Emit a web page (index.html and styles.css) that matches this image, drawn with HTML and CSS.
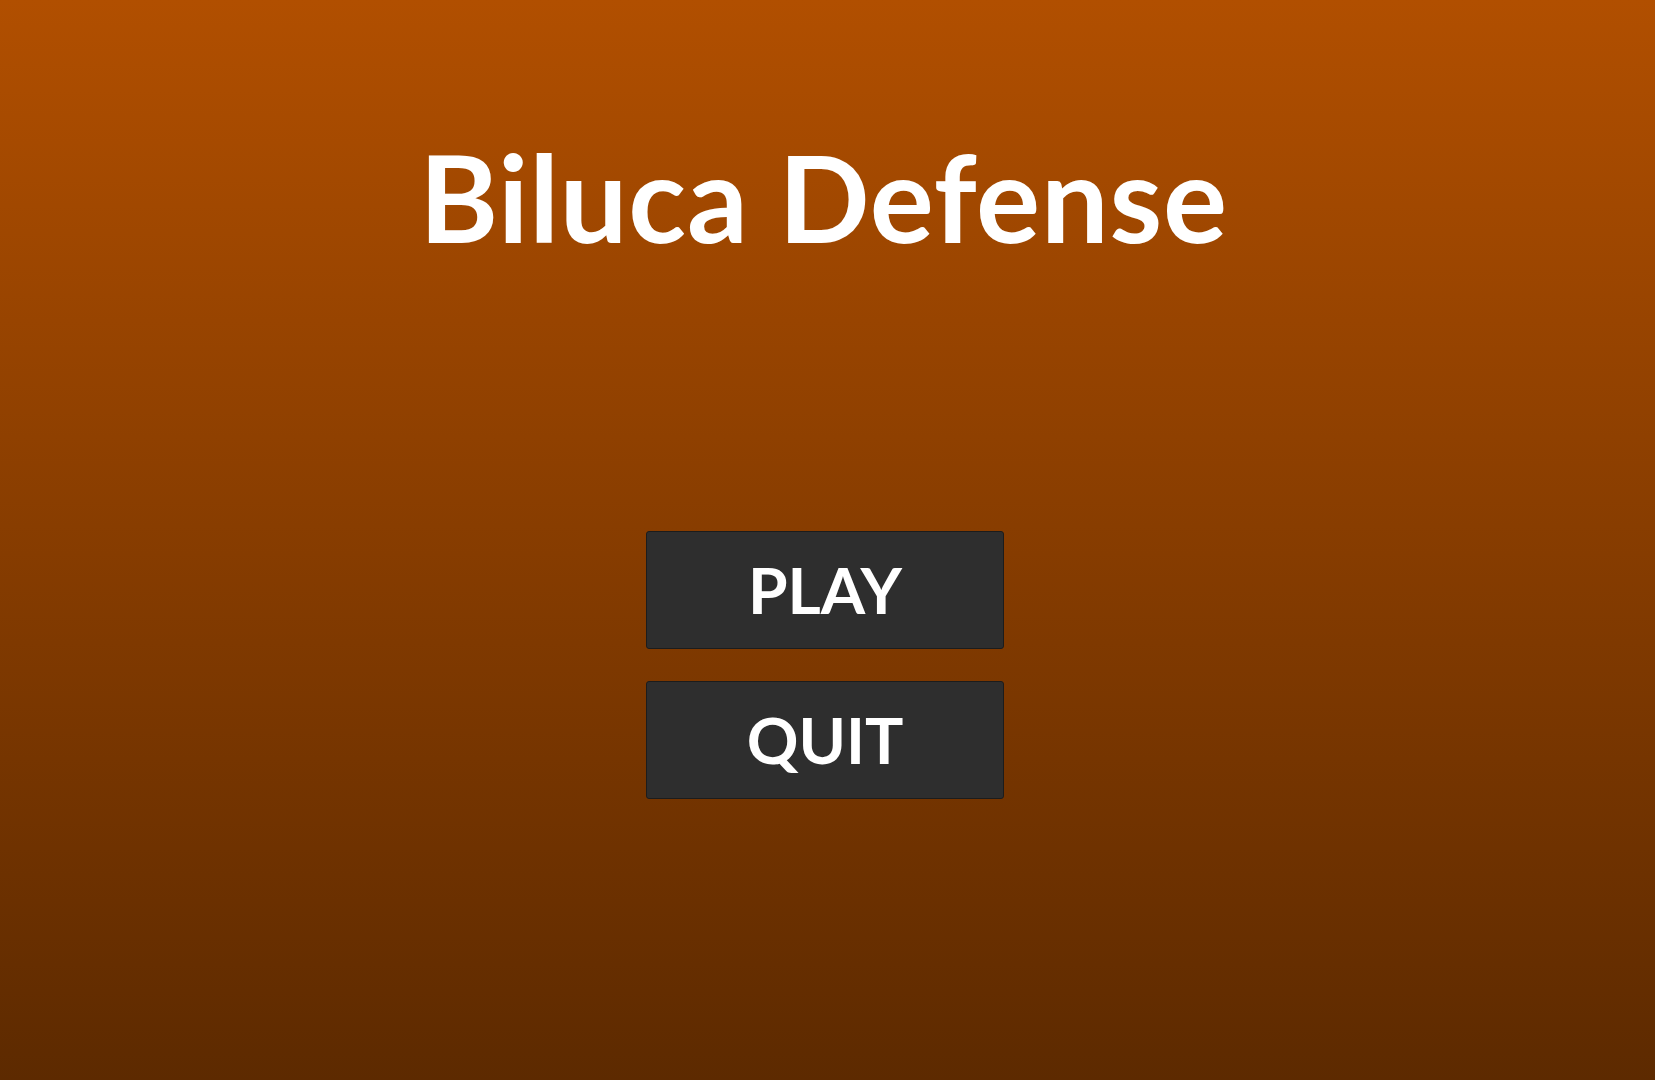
FILE: index.html
```html
<!DOCTYPE html>
<html lang="en">
<head>
<meta charset="utf-8">
<title>Biluca Defense</title>
<link rel="stylesheet" href="styles.css">
</head>
<body>
<main class="menu">
  <h1 class="title">Biluca Defense</h1>
  <div class="buttons">
    <button class="btn" type="button">PLAY</button>
    <button class="btn" type="button">QUIT</button>
  </div>
</main>
</body>
</html>
```
FILE: styles.css
```css
html, body {
  margin: 0;
  padding: 0;
  height: 100%;
}
body {
  background: linear-gradient(to bottom, #b14f00 0%, #5d2a00 100%);
  font-family: "Lato", "Open Sans", sans-serif;
  color: #ffffff;
  overflow: hidden;
}
.menu {
  display: flex;
  flex-direction: column;
  align-items: center;
  padding-top: 137px;
}
.title {
  margin: 0 0 0 -8px;
  font-size: 120px;
  line-height: 120px;
  font-weight: 700;
  letter-spacing: 0.8px;
}
.buttons {
  display: flex;
  flex-direction: column;
  gap: 32px;
  margin-top: 274px;
  margin-left: -5px;
}
.btn {
  width: 358px;
  height: 118px;
  box-sizing: border-box;
  background: #2e2e2e;
  border: 1px solid #1c1c1c;
  border-radius: 3px;
  color: #ffffff;
  font-family: "Lato", "Open Sans", sans-serif;
  font-size: 64px;
  line-height: 64px;
  font-weight: 700;
  padding: 0;
  display: flex;
  align-items: center;
  justify-content: center;
}
```
